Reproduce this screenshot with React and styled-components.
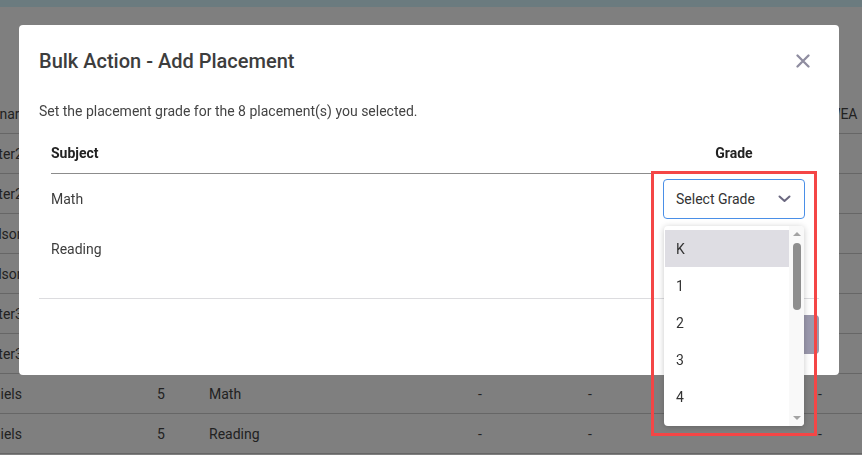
import React from 'react';
import styled, { createGlobalStyle } from 'styled-components';

const GlobalStyle = createGlobalStyle`
  html, body {
    margin: 0;
    padding: 0;
    background: #ffffff;
    font-family: Roboto, "Liberation Sans", Arial, sans-serif;
    overflow: hidden;
  }
  * {
    box-sizing: border-box;
  }
`;

const Page = styled.div`
  width: 100%;
  height: 455px;
  overflow: hidden;
`;

const AppBar = styled.div`
  height: 7px;
  background: #d6f6ff;
`;

// the roster behind the dialog is scrolled a little to the right
const TableWrap = styled.div`
  margin-top: 87px;
  margin-left: -40px;
  width: 960px;
`;

const Row = styled.div`
  display: grid;
  grid-template-columns: 181px 52px 269px 110px 115px 115px 115px;
  height: 40px;
  align-items: center;
  border-bottom: 1px solid #cccccc;
  color: #444444;
  font-size: 14px;
`;

const Cell = styled.div`
  padding-left: ${(p) => p.$pad || 16}px;
  white-space: nowrap;
  overflow: hidden;
`;

const Overlay = styled.div`
  position: fixed;
  inset: 0;
  background: rgba(0, 0, 0, 0.5);
`;

const Modal = styled.div`
  margin: 25px 0 0 19px;
  width: 820px;
  height: 350px;
  background: #ffffff;
  border-radius: 4px;
  display: flex;
  flex-direction: column;
`;

const ModalHeader = styled.div`
  height: 72px;
  padding: 0 28px 0 20px;
  display: flex;
  align-items: center;
  justify-content: space-between;
`;

const Title = styled.h2`
  margin: 0;
  font-size: 20px;
  font-weight: 500;
  color: #3d3d3d;
`;

const CloseButton = styled.button`
  width: 16px;
  height: 16px;
  padding: 0;
  border: none;
  background: transparent;
  display: flex;
  align-items: center;
  justify-content: center;
  cursor: pointer;
`;

const ModalBody = styled.div`
  margin: 0 20px;
  padding: 4px 0 24px;
  border-bottom: 1px solid #dcdcdf;
`;

const Description = styled.p`
  margin: 0 0 12px;
  font-size: 14px;
  line-height: 20px;
  color: #444444;
`;

const PlacementTable = styled.div`
  margin: 0 12px;
`;

const PlacementRow = styled.div`
  display: grid;
  grid-template-columns: 1fr 146px;
  align-items: center;
  height: ${(p) => (p.$head ? '41px' : '50px')};
  border-bottom: ${(p) => (p.$head ? '1px solid #8c8c8c' : 'none')};
  font-size: 14px;
  font-weight: ${(p) => (p.$head ? 700 : 400)};
  color: ${(p) => (p.$head ? '#222222' : '#3d3d3d')};
`;

const GradeHead = styled.div`
  text-align: center;
`;

const GradeCell = styled.div`
  position: relative;
  display: flex;
  justify-content: center;
`;

const SelectBox = styled.div`
  width: 142px;
  height: 40px;
  border: 1px solid #4a8fe7;
  border-radius: 4px;
  display: flex;
  align-items: center;
  justify-content: space-between;
  padding: 0 13px 0 12px;
  font-size: 14px;
  color: #333333;
  background: #ffffff;
`;

const Menu = styled.div`
  position: absolute;
  top: 47px;
  left: 3px;
  width: 140px;
  height: 200px;
  background: #ffffff;
  border-radius: 4px;
  box-shadow: 0 1px 6px rgba(0, 0, 0, 0.22);
  display: flex;
  overflow: hidden;
  z-index: 2;
`;

const Options = styled.div`
  flex: 1;
  padding-top: 4px;
  padding-left: 1px;
`;

const Option = styled.div`
  height: 37px;
  display: flex;
  align-items: center;
  padding-left: 11px;
  font-size: 14px;
  color: #333333;
  background: ${(p) => (p.$active ? '#dedde3' : 'transparent')};
`;

const ScrollTrack = styled.div`
  width: 15px;
  background: #f9f9f9;
  display: flex;
  flex-direction: column;
  align-items: center;
  padding: 6px 0 6px;
`;

const Arrow = styled.div`
  width: 0;
  height: 0;
  border-left: 4px solid transparent;
  border-right: 4px solid transparent;
  ${(p) =>
    p.$down
      ? 'border-top: 4px solid #a3a3a3; margin-top: auto;'
      : 'border-bottom: 4px solid #a3a3a3;'}
`;

const Thumb = styled.div`
  width: 8px;
  height: 67px;
  margin-top: 7px;
  border-radius: 4px;
  background: #8e8e8e;
`;

const Highlight = styled.div`
  position: absolute;
  left: -10px;
  top: -8px;
  width: 166px;
  height: 265px;
  border: 3px solid #f44646;
  pointer-events: none;
  z-index: 3;
`;

const ModalFooter = styled.div`
  flex: 1;
  display: flex;
  align-items: center;
  justify-content: flex-end;
  padding: 0 20px 6px;
`;

const SubmitButton = styled.button`
  height: 39px;
  padding: 0 16px;
  border: none;
  border-radius: 4px;
  background: #9b99ad;
  color: #ffffff;
  font-family: inherit;
  font-size: 14px;
  font-weight: 500;
`;

const bgRows = [
  ['Seminar', 'Grade', 'Subject', 'Term', 'Date', 'Score', 'NWEA'],
  ['Tester2', '5', 'Math', '-', '-', '-', '-'],
  ['Tester2', '5', 'Reading', '-', '-', '-', '-'],
  ['Hudson', '5', 'Math', '-', '-', '-', '-'],
  ['Hudson', '5', 'Reading', '-', '-', '-', '-'],
  ['Tester3', '5', 'Math', '-', '-', '-', '-'],
  ['Tester3', '5', 'Reading', '-', '-', '-', '-'],
  ['Daniels', '5', 'Math', '-', '-', '-', '-'],
  ['Daniels', '5', 'Reading', '-', '-', '-', '-'],
];

const grades = ['K', '1', '2', '3', '4', '5'];

function CloseIcon() {
  return (
    <svg width="14" height="14" viewBox="0 0 14 14">
      <path d="M1.5 1.5 L12.5 12.5 M12.5 1.5 L1.5 12.5" stroke="#8f8da0" strokeWidth="2.3" strokeLinecap="round" />
    </svg>
  );
}

function Chevron() {
  return (
    <svg width="13" height="8" viewBox="0 0 13 8">
      <path d="M1.5 1.5 L6.5 6 L11.5 1.5" fill="none" stroke="#6b6880" strokeWidth="2" strokeLinecap="round" strokeLinejoin="round" />
    </svg>
  );
}

function GradeSelect() {
  return (
    <GradeCell>
      <SelectBox>
        <span>Select Grade</span>
        <Chevron />
      </SelectBox>
      <Menu>
        <Options>
          {grades.map((g, i) => (
            <Option key={g} $active={i === 0}>
              {g}
            </Option>
          ))}
        </Options>
        <ScrollTrack>
          <Arrow />
          <Thumb />
          <Arrow $down />
        </ScrollTrack>
      </Menu>
      <Highlight />
    </GradeCell>
  );
}

export default function App() {
  return (
    <>
      <GlobalStyle />
      <Page>
        <AppBar />
        <TableWrap>
          {bgRows.map((r, i) => (
            <Row key={i}>
              {r.map((c, j) => (
                <Cell key={j} $pad={i === 0 && j === 0 ? 8 : 16}>
                  {c}
                </Cell>
              ))}
            </Row>
          ))}
        </TableWrap>
      </Page>
      <Overlay>
        <Modal>
          <ModalHeader>
            <Title>Bulk Action - Add Placement</Title>
            <CloseButton aria-label="Close">
              <CloseIcon />
            </CloseButton>
          </ModalHeader>
          <ModalBody>
            <Description>Set the placement grade for the 8 placement(s) you selected.</Description>
            <PlacementTable>
              <PlacementRow $head>
                <div>Subject</div>
                <GradeHead>Grade</GradeHead>
              </PlacementRow>
              <PlacementRow>
                <div>Math</div>
                <GradeSelect />
              </PlacementRow>
              <PlacementRow>
                <div>Reading</div>
                <div />
              </PlacementRow>
            </PlacementTable>
          </ModalBody>
          <ModalFooter>
            <SubmitButton disabled>Submit</SubmitButton>
          </ModalFooter>
        </Modal>
      </Overlay>
    </>
  );
}
